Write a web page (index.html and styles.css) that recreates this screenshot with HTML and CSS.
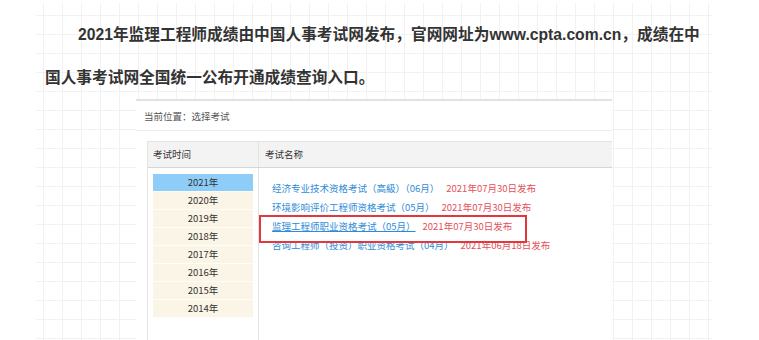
FILE: index.html
```html
<!DOCTYPE html>
<html lang="zh-CN">
<head>
<meta charset="utf-8">
<title>2021年监理工程师成绩</title>
<link rel="stylesheet" href="styles.css">
</head>
<body>
<div class="sheet">
  <p class="headline">2021年监理工程师成绩由中国人事考试网发布，官网网址为www.cpta.com.cn，成绩在中国人事考试网全国统一公布开通成绩查询入口。</p>
  <div class="shot">
    <div class="crumb">当前位置：选择考试</div>
    <div class="table">
      <div class="thead">
        <div class="col-time">考试时间</div>
        <div class="col-name">考试名称</div>
      </div>
      <div class="tbody">
        <div class="col-time">
          <ul class="years">
            <li class="active">2021年</li>
            <li>2020年</li>
            <li>2019年</li>
            <li>2018年</li>
            <li>2017年</li>
            <li>2016年</li>
            <li>2015年</li>
            <li>2014年</li>
          </ul>
        </div>
        <div class="col-name">
          <ul class="exams">
            <li><a>经济专业技术资格考试（高級）（06月）</a><span class="date">2021年07月30日发布</span></li>
            <li><a>环境影响评价工程师资格考试（05月）</a><span class="date">2021年07月30日发布</span></li>
            <li class="marked"><a class="hover">监理工程师职业资格考试（05月）</a><span class="date">2021年07月30日发布</span></li>
            <li><a>咨询工程师（投资）职业资格考试（04月）</a><span class="date">2021年06月18日发布</span></li>
          </ul>
        </div>
      </div>
    </div>
  </div>
</div>
</body>
</html>
```

FILE: styles.css
```css
* { box-sizing: border-box; }
html, body {
  margin: 0;
  padding: 0;
  background: #fff;
  width: 759px;
  height: 340px;
  overflow: hidden;
}
.sheet {
  margin: 3px 0 0 36px;
  width: 676px;
  height: 337px;
  overflow: hidden;
  background-image:
    linear-gradient(to right, #f1f1f1 1px, transparent 1px),
    linear-gradient(to bottom, #f1f1f1 1px, transparent 1px);
  background-size: 19px 19px;
  background-position: 7px 12px;
  padding-top: 10px;
}
.headline {
  margin: 0 0 0 9px;
  width: 660px;
  font-family: "Liberation Sans", "Noto Sans CJK SC", sans-serif;
  font-weight: bold;
  font-size: 15.7px;
  line-height: 43px;
  color: #333;
  text-indent: 33px;
}
.shot {
  margin: 0 0 0 100px;
  width: 476px;
  height: 260px;
  background: #fff;
  border-top: 2px solid #e2e2e2;
  font-family: "Noto Sans CJK SC", "Liberation Sans", sans-serif;
  font-size: 9.5px;
  color: #333;
}
.crumb {
  height: 30px;
  padding-left: 8px;
  line-height: 30px;
  color: #555;
  border-bottom: 1px solid #ececec;
}
.table {
  margin: 10px 0 0 11px;
  border-left: 1px solid #e3e3e3;
  border-top: 1px solid #e3e3e3;
}
.thead {
  display: flex;
  height: 26px;
  background: #f3f3f3;
  border-bottom: 1px solid #d6d6d6;
  line-height: 25px;
}
.col-time {
  width: 111px;
  flex: none;
  border-right: 1px solid #e3e3e3;
  padding-left: 5px;
}
.col-name {
  flex: 1;
  padding-left: 6px;
}
.tbody {
  display: flex;
  height: 200px;
}
.tbody .col-time { padding-top: 6px; }
.tbody .col-name { padding: 10px 0 0 0; }
.years {
  list-style: none;
  margin: 0;
  padding: 0;
  width: 100px;
  background: #fbf5e7;
}
.years li {
  height: 18px;
  line-height: 17px;
  text-align: center;
  border-bottom: 1px solid #fffdf8;
  color: #333;
}
.years li.active {
  background: #8dcdf8;
}
.exams {
  list-style: none;
  margin: 0;
  padding: 0;
}
.exams li {
  display: flex;
  align-items: center;
  height: 19px;
  padding-left: 13px;
  white-space: nowrap;
}
.exams a {
  color: #2f8bd8;
}
.exams a.hover {
  text-decoration: underline;
}
.date {
  margin-left: 7px;
  color: #e4505a;
}
.marked {
  position: relative;
}
.marked::after {
  content: "";
  position: absolute;
  left: 0;
  top: -1px;
  width: 264px;
  height: 24px;
  border: 2px solid #e2383d;
}
```
